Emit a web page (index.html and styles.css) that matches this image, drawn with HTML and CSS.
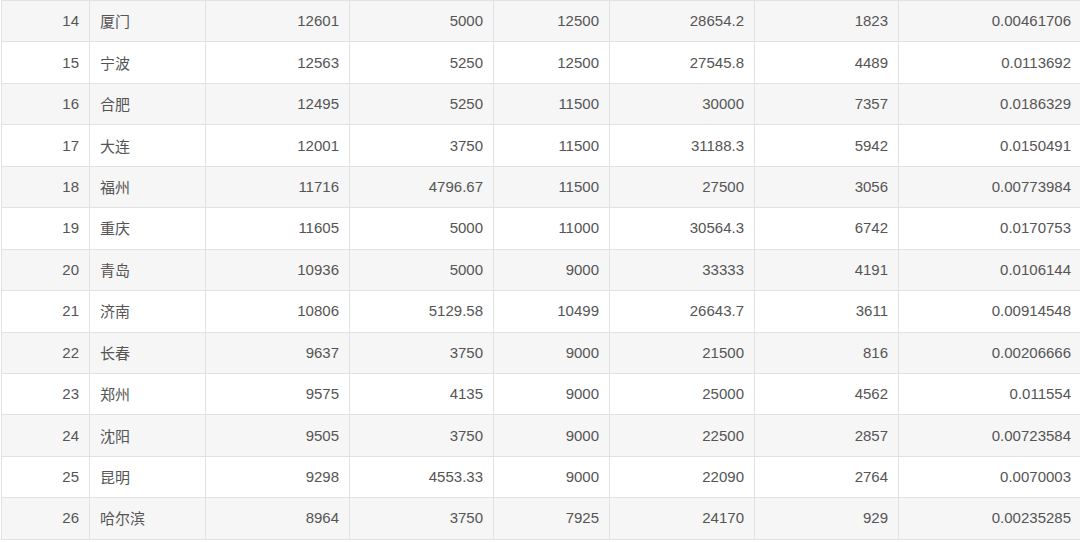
FILE: index.html
```html
<!DOCTYPE html>
<html lang="zh">
<head>
<meta charset="utf-8">
<link rel="stylesheet" href="styles.css">
</head>
<body>
<table class="data">
<colgroup>
<col class="c1"><col class="c2"><col class="c3"><col class="c4"><col class="c5"><col class="c6"><col class="c7"><col class="c8">
</colgroup>
<tbody>
<tr><td>14</td><td class="city">厦门</td><td>12601</td><td>5000</td><td>12500</td><td>28654.2</td><td>1823</td><td>0.00461706</td></tr>
<tr><td>15</td><td class="city">宁波</td><td>12563</td><td>5250</td><td>12500</td><td>27545.8</td><td>4489</td><td>0.0113692</td></tr>
<tr><td>16</td><td class="city">合肥</td><td>12495</td><td>5250</td><td>11500</td><td>30000</td><td>7357</td><td>0.0186329</td></tr>
<tr><td>17</td><td class="city">大连</td><td>12001</td><td>3750</td><td>11500</td><td>31188.3</td><td>5942</td><td>0.0150491</td></tr>
<tr><td>18</td><td class="city">福州</td><td>11716</td><td>4796.67</td><td>11500</td><td>27500</td><td>3056</td><td>0.00773984</td></tr>
<tr><td>19</td><td class="city">重庆</td><td>11605</td><td>5000</td><td>11000</td><td>30564.3</td><td>6742</td><td>0.0170753</td></tr>
<tr><td>20</td><td class="city">青岛</td><td>10936</td><td>5000</td><td>9000</td><td>33333</td><td>4191</td><td>0.0106144</td></tr>
<tr><td>21</td><td class="city">济南</td><td>10806</td><td>5129.58</td><td>10499</td><td>26643.7</td><td>3611</td><td>0.00914548</td></tr>
<tr><td>22</td><td class="city">长春</td><td>9637</td><td>3750</td><td>9000</td><td>21500</td><td>816</td><td>0.00206666</td></tr>
<tr><td>23</td><td class="city">郑州</td><td>9575</td><td>4135</td><td>9000</td><td>25000</td><td>4562</td><td>0.011554</td></tr>
<tr><td>24</td><td class="city">沈阳</td><td>9505</td><td>3750</td><td>9000</td><td>22500</td><td>2857</td><td>0.00723584</td></tr>
<tr><td>25</td><td class="city">昆明</td><td>9298</td><td>4553.33</td><td>9000</td><td>22090</td><td>2764</td><td>0.0070003</td></tr>
<tr><td>26</td><td class="city">哈尔滨</td><td>8964</td><td>3750</td><td>7925</td><td>24170</td><td>929</td><td>0.00235285</td></tr>
</tbody>
</table>
</body>
</html>
```
FILE: styles.css
```css
html, body {
  margin: 0;
  padding: 0;
  background: #ffffff;
  overflow: hidden;
}
body {
  padding-left: 1px;
}
.data {
  border-collapse: collapse;
  table-layout: fixed;
  width: 1080px;
  font-family: "Liberation Sans", Arial, "Noto Sans CJK SC", sans-serif;
  font-size: 15px;
  color: #555555;
}
.c1 { width: 88px; }
.c2 { width: 116px; }
.c3 { width: 144px; }
.c4 { width: 144px; }
.c5 { width: 116px; }
.c6 { width: 145px; }
.c7 { width: 144px; }
.c8 { width: 183px; }
.data td {
  border: 1px solid #e2e2e2;
  height: 41.45px;
  padding: 0 10px 1px;
  text-align: right;
  vertical-align: middle;
  white-space: nowrap;
  box-sizing: border-box;
}
.data td.city {
  text-align: left;
  font-family: "Noto Sans CJK SC", "Liberation Sans", sans-serif;
}
.data tr:nth-child(odd) td {
  background: #f6f6f6;
}
```
